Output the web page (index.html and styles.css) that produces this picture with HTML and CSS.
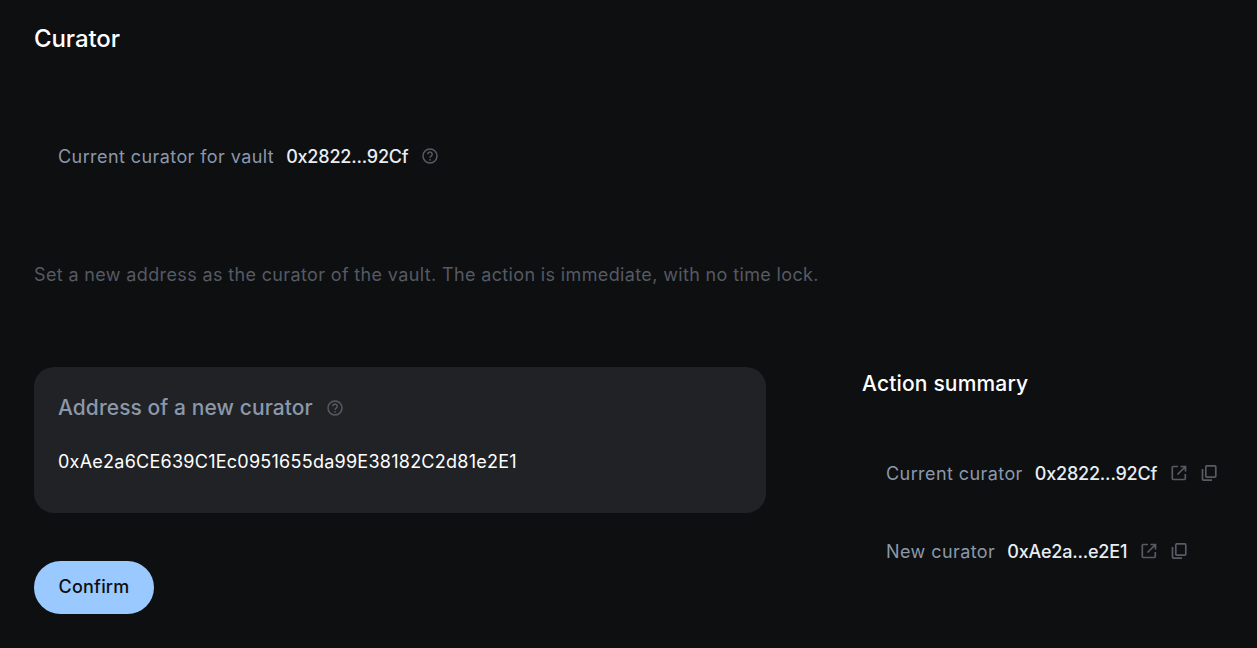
FILE: index.html
```html
<!DOCTYPE html>
<html lang="en">
<head>
<meta charset="utf-8">
<title>Curator</title>
<link rel="stylesheet" href="styles.css">
</head>
<body>
<svg class="defs" width="0" height="0" aria-hidden="true">
  <symbol id="help" viewBox="0 0 16 16">
    <circle cx="8" cy="8" r="7" fill="none" stroke="currentColor" stroke-width="1.5"/>
    <path d="M5.8 6.3a2.2 2.2 0 1 1 3.4 1.8c-.8.5-1.2.9-1.2 1.6" fill="none" stroke="currentColor" stroke-width="1.5"/>
    <circle cx="8" cy="11.8" r=".9" fill="currentColor"/>
  </symbol>
  <symbol id="ext" viewBox="0 0 16 16">
    <path d="M7 1.5H2.2a.9.9 0 0 0-.9.9v11.2c0 .5.4.9.9.9h11.2c.5 0 .9-.4.9-.9V9M6.5 9.5 14 2M9.5 1.5h5v5" fill="none" stroke="currentColor" stroke-width="1.7"/>
  </symbol>
  <symbol id="copy" viewBox="0 0 16 16">
    <rect x="4.8" y=".8" width="10" height="11.4" rx="1.2" fill="none" stroke="currentColor" stroke-width="1.7"/>
    <path d="M1.5 4v10c0 .7.5 1.2 1.2 1.2H11" fill="none" stroke="currentColor" stroke-width="1.7"/>
  </symbol>
</svg>
<main class="page">
  <h1 class="title">Curator</h1>
  <div class="current">
    <span class="label">Current curator for vault</span>
    <span class="addr">0x2822...92Cf</span>
    <svg class="icon help"><use href="#help"/></svg>
  </div>
  <p class="desc">Set a new address as the curator of the vault. The action is immediate, with no time lock.</p>
  <div class="columns">
    <section class="left">
      <div class="card">
        <div class="card-label">Address of a new curator <svg class="icon help"><use href="#help"/></svg></div>
        <div class="card-value">0xAe2a6CE639C1Ec0951655da99E38182C2d81e2E1</div>
      </div>
      <button class="confirm">Confirm</button>
    </section>
    <aside class="summary">
      <h2 class="summary-title">Action summary</h2>
      <div class="row row-first">
        <span class="label">Current curator</span>
        <span class="addr">0x2822...92Cf</span>
        <svg class="icon act"><use href="#ext"/></svg>
        <svg class="icon act"><use href="#copy"/></svg>
      </div>
      <div class="row">
        <span class="label">New curator</span>
        <span class="addr">0xAe2a...e2E1</span>
        <svg class="icon act"><use href="#ext"/></svg>
        <svg class="icon act"><use href="#copy"/></svg>
      </div>
    </aside>
  </div>
</main>
</body>
</html>
```

FILE: styles.css
```css
* { box-sizing: border-box; }
html, body { margin: 0; height: 100%; }
body {
  background: #0e0f11;
  color: #fff;
  font-family: Inter, "Liberation Sans", sans-serif;
  overflow: hidden;
}
.defs { position: absolute; }
.page { padding: 25px 34px 0; }
.title { margin: 0; font-size: 24px; line-height: 28px; font-weight: 500; letter-spacing: -0.1px; }
.current {
  display: flex;
  align-items: center;
  margin-top: 90px;
  padding-left: 24px;
  height: 26px;
}
.label { color: #8b98a9; font-size: 18px; letter-spacing: 0.42px; }
.addr { color: #e8edf3; font-size: 18px; font-weight: 500; margin-left: 12px; letter-spacing: -0.2px; }
.icon { display: block; flex: none; }
.help { width: 16px; height: 16px; color: #565b64; margin-left: 14px; }
.desc { margin: 94px 0 0; font-size: 18px; line-height: 24px; color: #555a63; letter-spacing: 0.36px; }
.columns { display: flex; margin-top: 80px; }
.left { width: 732px; }
.card {
  background: #212226;
  border-radius: 20px;
  height: 146px;
  padding: 27px 24px;
}
.card-label {
  display: flex;
  align-items: center;
  color: #8b98a9;
  font-size: 21px;
  line-height: 28px;
  font-weight: 500;
  letter-spacing: 0.08px;
}
.card-value { margin-top: 28px; font-size: 18px; line-height: 24px; font-weight: 400; letter-spacing: 0.25px; }
.confirm {
  display: block;
  margin-top: 48px;
  width: 120px;
  height: 53px;
  border: 0;
  border-radius: 27px;
  padding: 0 0 2px;
  background: #99c9ff;
  color: #0e0f11;
  font: 500 18px Inter, "Liberation Sans", sans-serif;
  letter-spacing: 0.2px;
}
.summary { margin-left: 96px; padding-top: 5px; }
.summary-title { margin: 0; font-size: 21px; line-height: 24px; font-weight: 500; letter-spacing: 0.17px; }
.row { display: flex; align-items: center; padding-left: 24px; height: 26px; margin-top: 52px; }
.row-first { margin-top: 64px; }
.act { width: 16px; height: 16px; color: #565b64; margin-left: 14px; }
```
